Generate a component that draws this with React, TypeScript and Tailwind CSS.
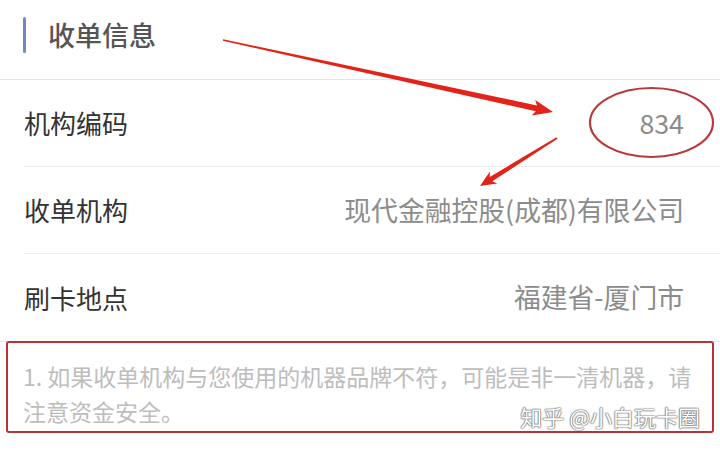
import React from "react";

const rows = [
  { label: "机构编码", value: "834" },
  { label: "收单机构", value: "现代金融控股(成都)有限公司" },
  { label: "刷卡地点", value: "福建省-厦门市" },
];

export default function App() {
  return (
    <div className="relative w-[720px] h-[455px] bg-white overflow-hidden font-['Noto_Sans_CJK_SC','Noto_Sans',sans-serif]">
      {/* header */}
      <div className="h-[80px] flex items-start pt-[17px] pl-[23px] border-b border-[#e6e6e6]">
        <div className="w-[3px] h-[36px] rounded-full bg-[#7089c2]" />
        <div className="ml-[22px] text-[27px] leading-[36px] text-[#555555] font-medium">收单信息</div>
      </div>

      {/* rows */}
      <div className="pl-[24px] border-b border-[#e6e6e6]">
        {rows.map((r, i) => (
          <div
            key={r.label}
            className={`h-[87px] flex items-center justify-between pr-[36px] ${i < rows.length - 1 ? "border-b border-[#ececec]" : ""}`}
          >
            <div className="text-[26px] text-[#333333] leading-none">{r.label}</div>
            <div className="text-[26.8px] text-[#8c8c8c] leading-none">{r.value}</div>
          </div>
        ))}
      </div>

      {/* notice */}
      <div className="mx-[6px] mt-[-1px] h-[92px] border-2 border-[#b63434] rounded-[3px] pl-[15px] pt-[16px]">
        <div className="text-[23px] leading-[35px] text-[#bdbdbd] whitespace-nowrap">
          1. 如果收单机构与您使用的机器品牌不符，可能是非一清机器，请
          <br />
          注意资金安全。
        </div>
      </div>

      {/* watermark */}
      <div className="absolute right-[20px] top-[405px] text-[22px] leading-none text-white [text-shadow:0_0_1px_#555,0_0_1px_#555,0_0_2px_#777]">
        知乎 @小白玩卡圈
      </div>

      {/* annotations */}
      <svg className="absolute left-0 top-0 pointer-events-none" width="720" height="455" viewBox="0 0 720 455">
        <polygon
          points="223.2,39.2 537.0,105.5 535.2,99.9 553,112 531.8,115.5 535.8,111.3 222.8,40.8"
          fill="#e32219"
        />
        <polygon
          points="556.5,137.2 489.7,177.0 489.9,171.6 480,186 497.3,183.4 492.3,181.2 557.5,138.8"
          fill="#e32219"
        />
        <ellipse cx="651.5" cy="122.5" rx="61.5" ry="34.5" fill="none" stroke="#b8393a" strokeWidth="2.2" />
      </svg>
    </div>
  );
}
